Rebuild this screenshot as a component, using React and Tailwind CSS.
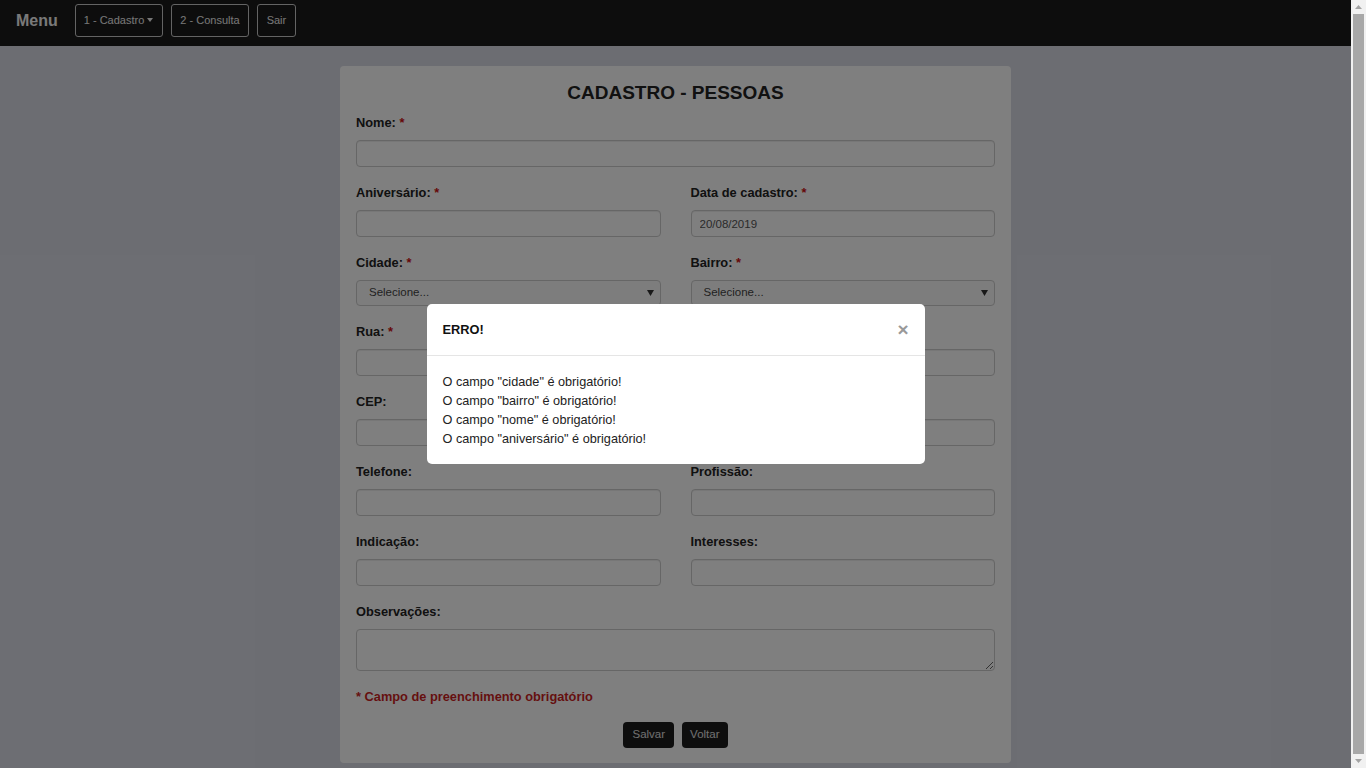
import React from "react";

const font = { fontFamily: '"Liberation Sans", Arial, sans-serif' };

function Label({ text, req }) {
  return (
    <div className="text-[12.8px] leading-[18px] font-bold text-[#222] mb-[8px] pt-[1px]">
      {text}
      {req && <span className="text-[#cc1111]"> *</span>}
    </div>
  );
}

function Input({ value }) {
  return (
    <input
      readOnly
      defaultValue={value || ""}
      className="block w-full h-[27px] rounded-[4px] border border-[#cccccc] bg-white px-[8px] text-[11.5px] text-[#555] shadow-[inset_0_1px_1px_rgba(0,0,0,0.075)] outline-none"
      style={font}
    />
  );
}

function Select() {
  return (
    <div className="flex h-[26px] w-full items-center justify-between rounded-[4px] border border-[#cccccc] bg-[#fbfbfb] pl-[12px] pr-[6px] text-[11.5px] text-[#444]">
      <span>Selecione...</span>
      <svg width="7" height="6" viewBox="0 0 7 6">
        <path d="M0 0 H7 L3.5 6 Z" fill="#333" />
      </svg>
    </div>
  );
}

function Field({ label, req, children }) {
  return (
    <div className="mb-[16px]">
      <Label text={label} req={req} />
      {children}
    </div>
  );
}

function Scrollbar() {
  return (
    <div className="flex h-full w-[15px] shrink-0 flex-col items-center bg-[#f1f1f1]">
      <div className="flex h-[14px] w-full items-center justify-center">
        <svg width="7" height="4" viewBox="0 0 7 4">
          <path d="M0 4 L3.5 0 L7 4 Z" fill="#a3a3a3" />
        </svg>
      </div>
      <div className="w-[11px] flex-1 bg-[#a8a8a8]" />
      <div className="flex h-[14px] w-full items-center justify-center">
        <svg width="7" height="4" viewBox="0 0 7 4">
          <path d="M0 0 L3.5 4 L7 0 Z" fill="#a3a3a3" />
        </svg>
      </div>
    </div>
  );
}

export default function App() {
  return (
    <div className="flex h-screen overflow-hidden" style={font}>
      <div className="relative h-full flex-1 overflow-hidden bg-[#d9dbe5]">
        <nav className="flex h-[46px] items-start bg-[#1a1a1a] px-[16px] pt-[4px]">
          <span className="mr-[17px] h-[33px] text-[16px] font-bold leading-[33px] text-[#f2f2f2]">Menu</span>
          <div className="flex gap-[8px]">
            <button className="flex h-[33px] items-center gap-[3px] rounded-[3px] border border-[#c8c8c8] pl-[8px] pr-[9px] text-[11px] text-[#eeeeee]">
              1 - Cadastro
              <span className="mt-[-1px] inline-block h-0 w-0 border-x-[3.5px] border-t-[4px] border-x-transparent border-t-[#eeeeee]" />
            </button>
            <button className="h-[33px] rounded-[3px] border border-[#c8c8c8] px-[8px] text-[11px] text-[#eeeeee]">
              2 - Consulta
            </button>
            <button className="h-[33px] rounded-[3px] border border-[#c8c8c8] px-[9px] text-[11px] text-[#eeeeee]">
              Sair
            </button>
          </div>
        </nav>

        <div className="pt-[20px] pb-[14px]">
          <div className="mx-auto w-[671px] rounded-[4px] bg-white px-[16px] pt-[15px] pb-[15px]">
            <h1 className="mb-[8px] text-center text-[19px] font-bold leading-[24px] text-[#222]">
              CADASTRO - PESSOAS
            </h1>

            <Field label="Nome:" req>
              <Input />
            </Field>

            <div className="grid grid-cols-2 gap-x-[30px]">
              <Field label="Aniversário:" req>
                <Input />
              </Field>
              <Field label="Data de cadastro:" req>
                <Input value="20/08/2019" />
              </Field>
              <Field label="Cidade:" req>
                <Select />
              </Field>
              <Field label="Bairro:" req>
                <Select />
              </Field>
              <Field label="Rua:" req>
                <Input />
              </Field>
              <Field label="Número:" req>
                <Input />
              </Field>
              <Field label="CEP:">
                <Input />
              </Field>
              <Field label="Complemento:">
                <Input />
              </Field>
              <Field label="Telefone:">
                <Input />
              </Field>
              <Field label="Profissão:">
                <Input />
              </Field>
              <Field label="Indicação:">
                <Input />
              </Field>
              <Field label="Interesses:">
                <Input />
              </Field>
            </div>

            <Field label="Observações:">
              <textarea
                readOnly
                className="block h-[42px] w-full rounded-[4px] border border-[#cccccc] bg-white px-[8px] text-[11px]"
              />
            </Field>

            <p className="pt-[1px] text-[12.8px] font-bold leading-[18px] text-[#cc1f1f]">
              * Campo de preenchimento obrigatório
            </p>

            <div className="mt-[16px] flex justify-center gap-[8px]">
              <button className="h-[26px] rounded-[4px] bg-[#1c1c1c] px-[9px] text-[11.5px] text-[#e0e0e0]">
                Salvar
              </button>
              <button className="h-[26px] rounded-[4px] bg-[#1c1c1c] px-[8px] text-[11.5px] text-[#e0e0e0]">
                Voltar
              </button>
            </div>
          </div>
        </div>

        <div className="absolute inset-0 flex items-center justify-center bg-black/50">
          <div className="w-[498px] rounded-[5px] bg-white">
            <div className="flex items-center justify-between border-b border-[#e5e5e5] px-[16px] py-[16px] leading-[19px]">
              <span className="text-[12.8px] font-bold text-[#111]">ERRO!</span>
              <span className="text-[19px] font-bold leading-[19px] text-[#999]">×</span>
            </div>
            <div className="px-[16px] pt-[17px] pb-[15px] text-[12.7px] leading-[19px] text-[#222]">
              <div>O campo "cidade" é obrigatório!</div>
              <div>O campo "bairro" é obrigatório!</div>
              <div>O campo "nome" é obrigatório!</div>
              <div>O campo "aniversário" é obrigatório!</div>
            </div>
          </div>
        </div>
      </div>
      <Scrollbar />
    </div>
  );
}
